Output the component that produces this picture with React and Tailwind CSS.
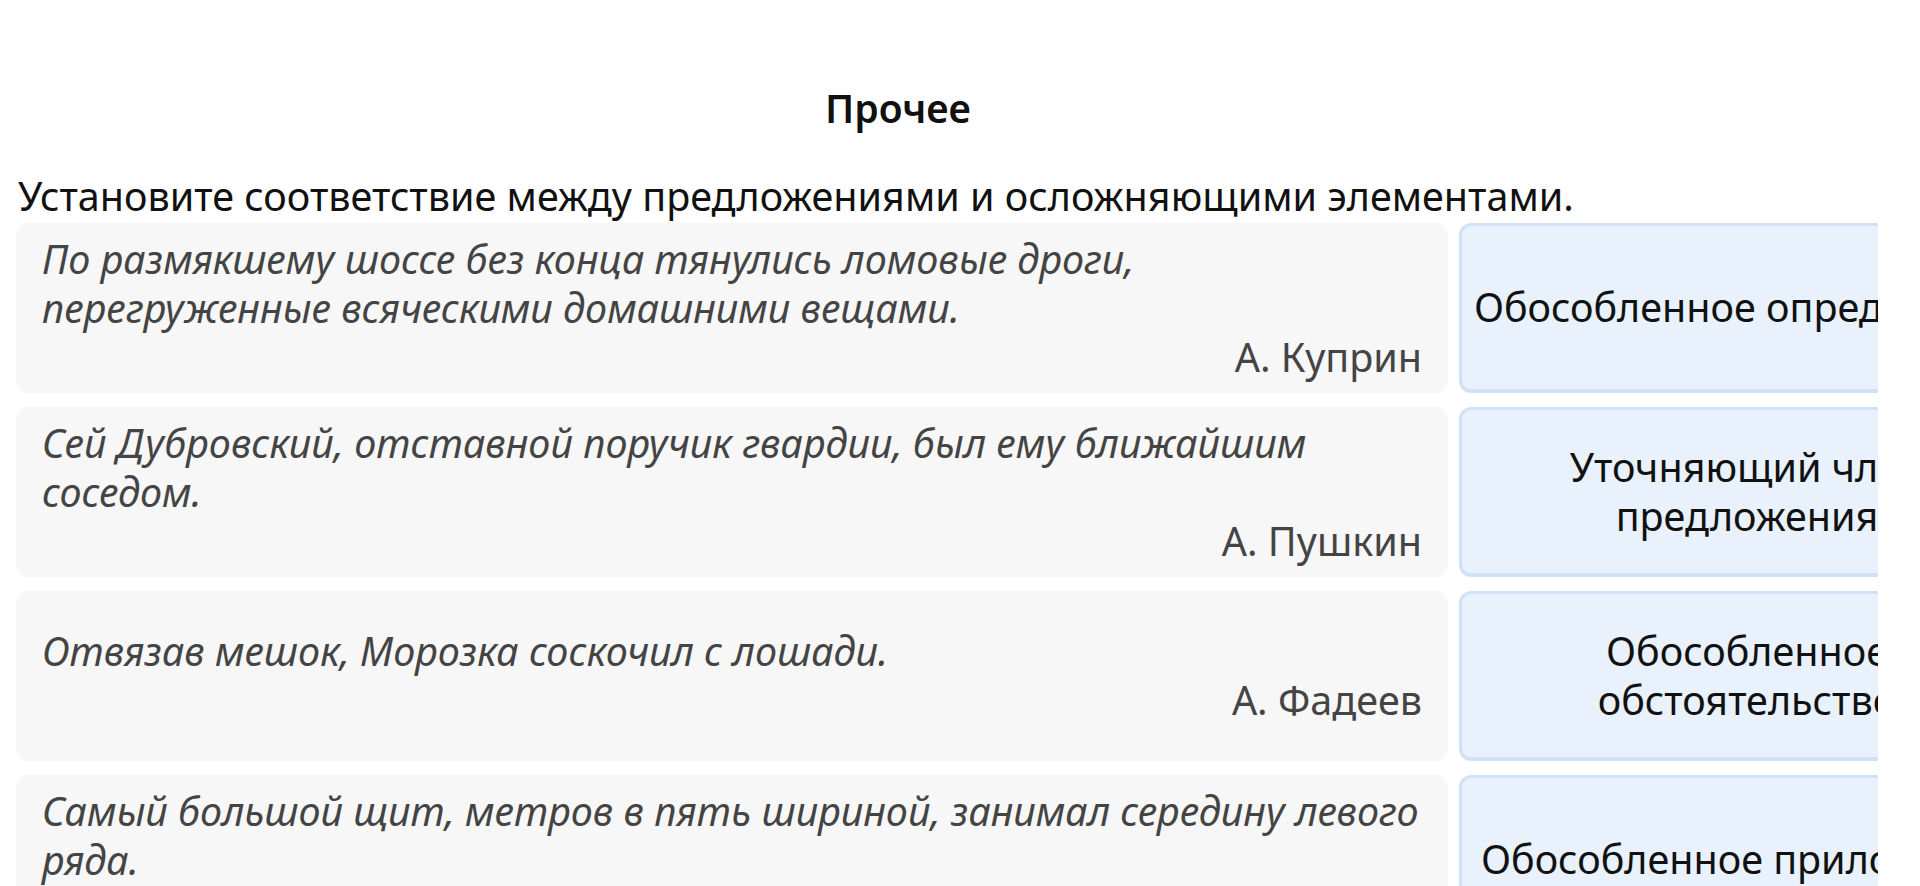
import React from 'react';

const rows = [
  {
    quote: ['По размякшему шоссе без конца тянулись ломовые дроги,', 'перегруженные всяческими домашними вещами.'],
    author: 'А. Куприн',
    answer: ['Обособленное определение'],
  },
  {
    quote: ['Сей Дубровский, отставной поручик гвардии, был ему ближайшим', 'соседом.'],
    author: 'А. Пушкин',
    answer: ['Уточняющий член', 'предложения'],
  },
  {
    quote: ['Отвязав мешок, Морозка соскочил с лошади.'],
    author: 'А. Фадеев',
    answer: ['Обособленное', 'обстоятельство'],
  },
  {
    quote: ['Самый большой щит, метров в пять шириной, занимал середину левого', 'ряда.'],
    author: 'В. Арсеньев',
    answer: ['Обособленное приложение'],
  },
];

function Lines({ lines }) {
  return lines.map((line, i) => (
    <React.Fragment key={i}>
      {i > 0 && <br />}
      {line}
    </React.Fragment>
  ));
}

export default function App() {
  return (
    <div className="h-[886px] overflow-hidden bg-white font-['Noto_Sans',sans-serif] text-[#111]">
      <h1 className="w-[1796px] pt-[84px] text-center text-[39px] font-semibold leading-[48px]">Прочее</h1>

      <p className="mt-[40px] pl-[18px] text-[39.5px] leading-[48px]">
        Установите соответствие между предложениями и осложняющими элементами.
      </p>

      <div className="mt-[3px] ml-4 w-[1862px] overflow-hidden">
        <div className="grid grid-cols-[1432px_576px] gap-x-[11px] gap-y-[14px]">
          {rows.map((row) => (
            <React.Fragment key={row.author}>
              {/* sentence with its author */}
              <div className="flex h-[170px] flex-col justify-center rounded-xl bg-[#f7f7f7] px-[26px] text-[39.5px] leading-[49px] text-[#444]">
                <p className="italic">
                  <Lines lines={row.quote} />
                </p>
                <p className="text-right">{row.author}</p>
              </div>
              {/* draggable answer tile */}
              <div className="flex h-[170px] items-center justify-center rounded-xl border-[3px] border-b-4 border-[#d2e2f6] bg-[#e8f1fc] px-2 text-center text-[39.5px] leading-[49px] whitespace-nowrap">
                <p>
                  <Lines lines={row.answer} />
                </p>
              </div>
            </React.Fragment>
          ))}
        </div>
      </div>
    </div>
  );
}
